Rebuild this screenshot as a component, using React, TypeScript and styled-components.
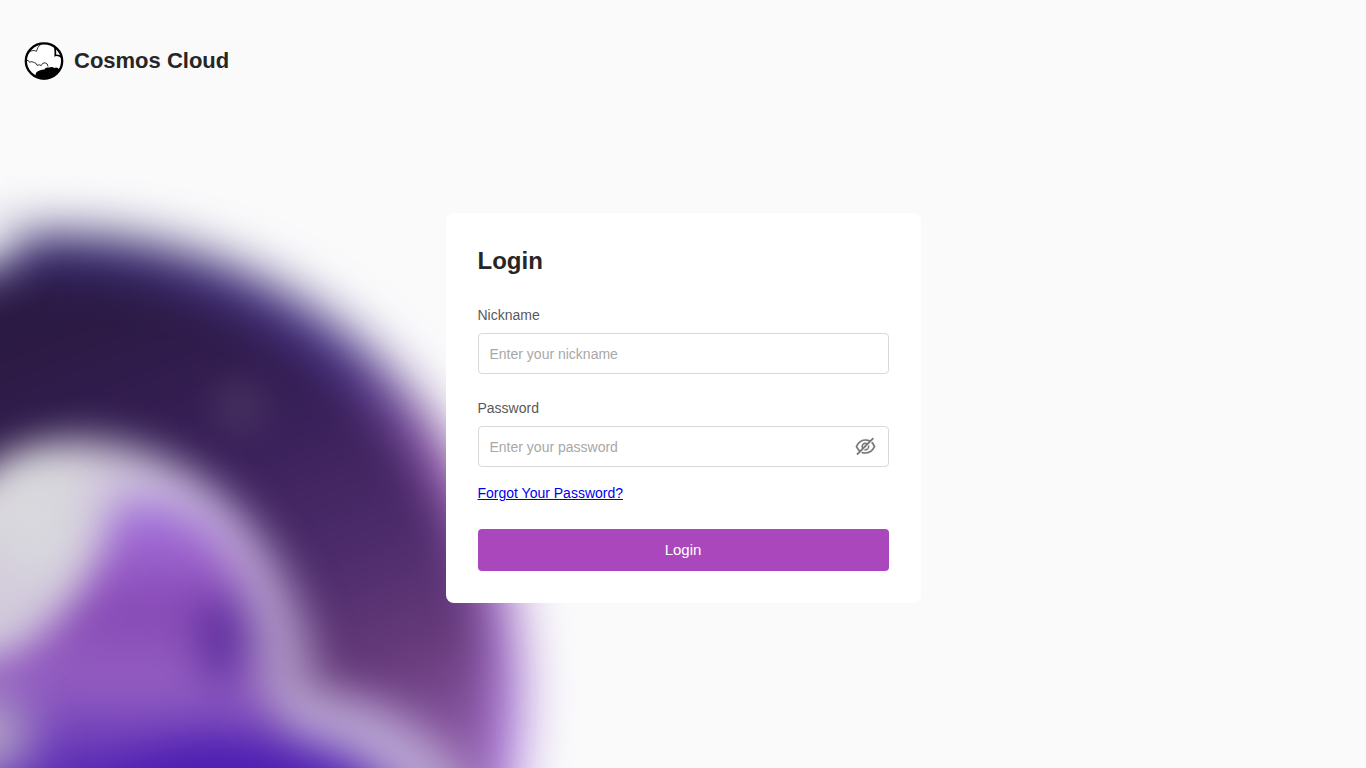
import React, { useState } from 'react';
import styled, { createGlobalStyle } from 'styled-components';
import { AiOutlineEye, AiOutlineEyeInvisible } from 'react-icons/ai';

const GlobalStyle = createGlobalStyle`
  *, *::before, *::after { box-sizing: border-box; }
  body {
    margin: 0;
    background: #fafafb;
    color: #262626;
    font-family: "Liberation Sans", Arial, sans-serif;
    font-size: 14px;
    line-height: 20px;
  }
`;

const Page = styled.div`
  position: relative;
  min-height: 100vh;
  display: flex;
  flex-direction: column;
  overflow: hidden;
`;

const Backdrop = styled.svg`
  position: absolute;
  left: 0;
  bottom: 0;
  width: 600px;
  height: 620px;
  pointer-events: none;
`;

const Header = styled.header`
  position: relative;
  display: flex;
  align-items: center;
  gap: 10px;
  padding: 41px 24px 23px;
`;

const Brand = styled.span`
  font-size: 22px;
  line-height: 40px;
  font-weight: 700;
`;

const Main = styled.main`
  position: relative;
  flex: 1;
  display: flex;
  align-items: center;
  justify-content: center;
  padding: 0 16px 56px;
`;

const Card = styled.form`
  width: 100%;
  max-width: 475px;
  padding: 32px;
  border-radius: 8px;
  background: #fff;
`;

const Title = styled.h1`
  margin: 0 0 28px;
  font-size: 24px;
  line-height: 32px;
`;

const Field = styled.div<{ $gap: number }>`
  display: flex;
  flex-direction: column;
  gap: 8px;
  margin-bottom: ${(p) => p.$gap}px;
`;

const Label = styled.label`
  color: #595959;
`;

const InputBox = styled.div`
  display: flex;
  align-items: center;
  height: 41px;
  border: 1px solid #d9d9d9;
  border-radius: 4px;
  background: #fff;
  &:focus-within { border-color: #ab47bc; }
`;

const Input = styled.input`
  flex: 1;
  min-width: 0;
  height: 100%;
  padding: 0 11px;
  border: 0;
  outline: 0;
  background: transparent;
  color: #262626;
  font: inherit;
  &::placeholder { color: #a8a8a8; opacity: 1; }
`;

const RevealButton = styled.button`
  display: flex;
  margin-right: 11px;
  padding: 0;
  border: 0;
  background: none;
  color: #757575;
  cursor: pointer;
  svg { stroke: currentColor; stroke-width: 6; }
`;

const ForgotLink = styled.a`
  display: table;
  margin-bottom: 26px;
  color: #0000ee;
  text-decoration: underline;
`;

const SubmitButton = styled.button`
  display: block;
  width: 100%;
  height: 42px;
  padding: 0 16px 2px;
  border: 0;
  border-radius: 4px;
  background: #ab47bc;
  color: #fff;
  font-family: inherit;
  font-size: 15px;
  cursor: pointer;
`;

function Logo() {
  return (
    <svg width="40" height="40" viewBox="0 1 40 40" aria-hidden="true">
      <defs>
        <clipPath id="disc"><circle cx="20" cy="21" r="18.4" /></clipPath>
      </defs>
      <ellipse cx="20" cy="21" rx="18.2" ry="17.6" fill="#fff" stroke="#000" strokeWidth="2.3" />
      <g clipPath="url(#disc)">
        <path d="M10.5 40 11.5 34.6Q12 31.5 15 30.8Q18 29.4 20.3 29.4Q21.6 26.8 25 27.6Q28 26 30.4 28Q33 26.4 35.4 29.5L38 30V41H9Z" fill="#000" />
        <path d="M3.5 14Q6 10.2 9 10.6Q11 10.2 12.3 11.4Q13.4 6.6 17.4 3.8M28.6 3.5Q32 9 31.2 15" fill="none" stroke="#000" strokeWidth="0.8" />
        <path d="M29.5 4Q32.3 9 31.2 15.6Q34 14.4 38 17.6" fill="none" stroke="#000" strokeWidth="1.5" />
        <path d="M2.5 20.3Q5 20 5.4 22.2Q8 21 10.4 22.6Q12.7 23.2 13 25.4Q15.5 24 17.2 25.6Q18.4 22.4 21 22.8Q24 23.4 24 26.5" fill="none" stroke="#000" strokeWidth="0.8" />
      </g>
    </svg>
  );
}

/* Blurred planet in the lower left corner; its user space starts at y = 148. */
function Planet() {
  return (
    <Backdrop viewBox="0 148 600 620" aria-hidden="true" colorInterpolationFilters="sRGB">
      <defs>
        <linearGradient id="sky" gradientUnits="userSpaceOnUse" x1="200" y1="270" x2="400" y2="770">
          <stop offset="0" stopColor="#2b1a43" />
          <stop offset="0.3" stopColor="#371f57" />
          <stop offset="0.6" stopColor="#4e2c6c" />
          <stop offset="0.8" stopColor="#663a7a" />
          <stop offset="1" stopColor="#8c58a4" />
        </linearGradient>
        <linearGradient id="rim" gradientUnits="userSpaceOnUse" x1="100" y1="240" x2="520" y2="720">
          <stop offset="0" stopColor="#35286c" />
          <stop offset="0.4" stopColor="#4a3588" />
          <stop offset="0.62" stopColor="#9058a8" />
          <stop offset="1" stopColor="#ae80dc" />
        </linearGradient>
        <linearGradient id="ring" gradientUnits="userSpaceOnUse" x1="60" y1="450" x2="330" y2="640">
          <stop offset="0" stopColor="#dcdade" />
          <stop offset="0.5" stopColor="#c3aedb" />
          <stop offset="1" stopColor="#a68cbc" />
        </linearGradient>
        <linearGradient id="core" gradientUnits="userSpaceOnUse" x1="0" y1="480" x2="0" y2="770">
          <stop offset="0" stopColor="#ab84ea" />
          <stop offset="0.25" stopColor="#9a60cc" />
          <stop offset="0.45" stopColor="#8648b4" />
          <stop offset="0.7" stopColor="#9560c2" />
          <stop offset="1" stopColor="#5b2cb4" />
        </linearGradient>
        <filter id="blurSmall" filterUnits="userSpaceOnUse" x="-200" y="50" width="1000" height="1000"><feGaussianBlur stdDeviation="18" /></filter>
        <filter id="blurMedium" filterUnits="userSpaceOnUse" x="-200" y="50" width="1000" height="1000"><feGaussianBlur stdDeviation="21" /></filter>
        <filter id="blurLarge" filterUnits="userSpaceOnUse" x="-200" y="50" width="1000" height="1000"><feGaussianBlur stdDeviation="25" /></filter>
      </defs>
      <circle cx="60" cy="697" r="464" fill="url(#rim)" filter="url(#blurLarge)" />
      <circle cx="58" cy="706" r="430" fill="url(#sky)" filter="url(#blurMedium)" />
      <ellipse cx="-24" cy="232" rx="38" ry="38" fill="#fafafb" filter="url(#blurLarge)" />
      <circle cx="240" cy="408" r="26" fill="#54406a" opacity="0.6" filter="url(#blurSmall)" />
      <g filter="url(#blurMedium)">
        <path d="M-80 540Q-20 446 80 441Q190 446 258 534Q312 606 318 688Q420 700 490 800V900H-80Z" fill="url(#ring)" />
        <path d="M260 690Q340 698 380 712Q440 745 470 800H300Z" fill="#b9a5d2" />
      </g>
      <g filter="url(#blurMedium)">
        <path d="M118 500Q190 496 228 562Q258 620 258 680Q264 716 300 738Q360 750 400 800V900H-60V665Q20 655 66 610Q104 565 118 500Z" fill="url(#core)" />
        <ellipse cx="224" cy="640" rx="26" ry="46" fill="#4c1f92" opacity="0.7" />
        <path d="M60 800Q120 752 205 738Q300 742 390 800Z" fill="#4b1cb2" />
      </g>
      <ellipse cx="-20" cy="735" rx="52" ry="42" fill="#b5a5c6" filter="url(#blurLarge)" />
      <ellipse cx="-10" cy="590" rx="50" ry="56" fill="#d2cadb" opacity="0.8" filter="url(#blurLarge)" />
      <ellipse cx="40" cy="525" rx="34" ry="54" fill="#d8d9dd" filter="url(#blurLarge)" />
    </Backdrop>
  );
}

export default function App() {
  const [visible, setVisible] = useState(false);
  return (
    <Page>
      <GlobalStyle />
      <Planet />
      <Header>
        <Logo />
        <Brand>Cosmos Cloud</Brand>
      </Header>
      <Main>
        <Card onSubmit={(e) => e.preventDefault()}>
          <Title>Login</Title>
          <Field $gap={24}>
            <Label htmlFor="nickname">Nickname</Label>
            <InputBox>
              <Input id="nickname" type="text" placeholder="Enter your nickname" />
            </InputBox>
          </Field>
          <Field $gap={16}>
            <Label htmlFor="password">Password</Label>
            <InputBox>
              <Input id="password" type={visible ? 'text' : 'password'} placeholder="Enter your password" />
              <RevealButton type="button" aria-label="Toggle password visibility" onClick={() => setVisible(!visible)}>
                {visible ? <AiOutlineEye size={23} /> : <AiOutlineEyeInvisible size={23} />}
              </RevealButton>
            </InputBox>
          </Field>
          <ForgotLink href="#forgot">Forgot Your Password?</ForgotLink>
          <SubmitButton type="submit">Login</SubmitButton>
        </Card>
      </Main>
    </Page>
  );
}
